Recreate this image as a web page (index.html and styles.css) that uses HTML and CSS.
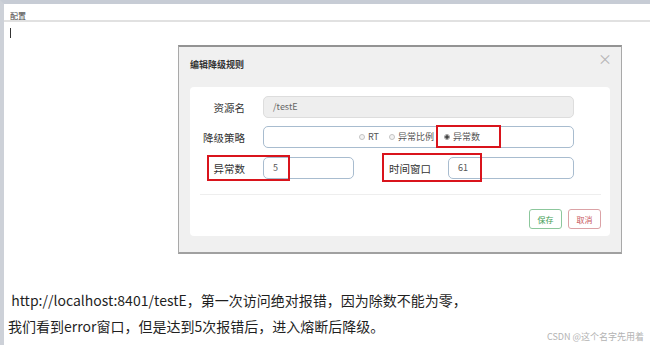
FILE: index.html
```html
<!DOCTYPE HTML>
<html>
    <head>
        <meta charset="utf-8">
        <link rel="stylesheet" href="styles.css">
    </head>
    <body>
        <div class="frame">
            <div class="tabbar"><span class="tab">配置</span></div>
            <div class="canvas">
                <span class="caret"></span>
                <div class="dialog">
                    <div class="dialog-head">
                        <span class="dialog-title">编辑降级规则</span>
                        <span class="close">×</span>
                    </div>
                    <div class="dialog-body">
                        <div class="form-row row-first">
                            <label class="form-label">资源名</label>
                            <div class="field field-readonly">/testE</div>
                        </div>
                        <div class="form-row row-second">
                            <label class="form-label">降级策略</label>
                            <div class="field field-radios">
                                <span class="radio"></span><span class="radio-text">RT</span>
                                <span class="radio"></span><span class="radio-text">异常比例</span>
                                <span class="radio radio-on"></span><span class="radio-text">异常数</span>
                            </div>
                        </div>
                        <div class="form-row">
                            <label class="form-label">异常数</label>
                            <div class="field field-short">5</div>
                            <label class="form-label label-wide">时间窗口</label>
                            <div class="field field-mid">61</div>
                        </div>
                        <div class="divider"></div>
                        <div class="actions">
                            <button class="btn btn-save">保存</button>
                            <button class="btn btn-cancel">取消</button>
                        </div>
                        <!-- red annotation boxes drawn over the form -->
                        <span class="mark mark-radio"></span>
                        <span class="mark mark-count"></span>
                        <span class="mark mark-window"></span>
                    </div>
                </div>
                <p class="note">&nbsp;http://localhost:8401/testE，第一次访问绝对报错，因为除数不能为零，<br>我们看到error窗口，但是达到5次报错后，进入熔断后降级。</p>
            </div>
        </div>
        <span class="watermark">CSDN @这个名字先用着</span>
    </body>
</html>
```

FILE: styles.css
```css
body {
  margin: 0;
  width: 650px;
  height: 345px;
  overflow: hidden;
  position: relative;
  background: #ffffff;
  font-family: "Noto Sans CJK SC", "Noto Sans", sans-serif;
}

.frame {
  box-sizing: border-box;
  height: 345px;
  border-top: 4px solid #c7ccd5;
  border-left: 4px solid #cdd1d8;
}

.tabbar {
  height: 16px;
  border-bottom: 2px solid #e1e1e1;
  padding-left: 6px;
  line-height: 16px;
}
.tab {
  font-size: 8px;
  color: #444;
}

.caret {
  display: block;
  width: 1px;
  height: 10px;
  margin: 6px 0 0 6px;
  background: #333;
}

.dialog {
  box-sizing: border-box;
  width: 444px;
  height: 209px;
  margin: 7px 0 0 174px;
  background: #f0f0f0;
  border: 1px solid #a9a9a9;
  border-top: 2px solid #939393;
  border-bottom: 2px solid #a0a0a0;
}

.dialog-head {
  display: flex;
  justify-content: space-between;
  height: 40px;
  box-sizing: border-box;
  padding: 10px 9px 0 11px;
}
.dialog-title {
  font-size: 9px;
  font-weight: bold;
  color: #333;
  line-height: 16px;
}
.close {
  font-size: 14px;
  color: #b5b5b5;
  line-height: 14px;
  margin-top: -6px;
}

.dialog-body {
  position: relative;
  box-sizing: border-box;
  height: 149px;
  margin: 0 11px;
  padding-top: 9px;
  background: #ffffff;
  border-radius: 4px;
}

.form-row {
  display: flex;
  align-items: center;
  height: 22px;
}
.row-first { margin-bottom: 8px; }
.row-second { margin-bottom: 9px; }

.form-label {
  width: 55px;
  margin-right: 18px;
  text-align: right;
  font-size: 10.5px;
  color: #333;
}
.label-wide {
  width: 77px;
  margin-right: 17px;
}

.field {
  box-sizing: border-box;
  height: 22px;
  width: 311px;
  padding-left: 9px;
  border: 1px solid #a8bccf;
  border-radius: 5px;
  font-size: 9px;
  line-height: 20px;
  color: #555;
}
.field-readonly {
  background: #eeeeee;
  border-color: #dddddd;
  color: #666;
}
.field-short { width: 91px; }
.field-mid { width: 126px; }

.field-radios {
  display: flex;
  align-items: center;
  padding-left: 95px;
}
.radio {
  box-sizing: border-box;
  width: 6px;
  height: 6px;
  border-radius: 50%;
  border: 1px solid #c4c4c4;
  background: #f3f3f3;
  margin-right: 3px;
}
.radio-on {
  border-color: #999;
  background: radial-gradient(circle, #444 0 1.5px, #f3f3f3 2px);
}
.radio-text {
  margin-right: 10px;
}

.divider {
  margin: 15px 9px 0 10px;
  border-top: 1px solid #eeeeee;
}

.actions {
  display: flex;
  justify-content: flex-end;
  gap: 6px;
  margin-top: 14px;
  padding-right: 9px;
}
.btn {
  box-sizing: border-box;
  height: 20px;
  width: 33px;
  padding: 0;
  font-family: inherit;
  font-size: 8px;
  background: #ffffff;
  border-radius: 3px;
}
.btn-save {
  border: 1px solid #8cc79c;
  color: #3e9c53;
}
.btn-cancel {
  border: 1px solid #dba2a6;
  color: #c8585e;
}

.mark {
  position: absolute;
  box-sizing: border-box;
  border: 2px solid #d9141c;
}
.mark-radio { left: 246px; top: 38px; width: 65px; height: 23px; }
.mark-count { left: 17px; top: 68px; width: 83px; height: 26px; }
.mark-window { left: 192px; top: 66px; width: 100px; height: 29px; }

.note {
  margin: 33px 0 0 4px;
  font-size: 14px;
  line-height: 26px;
  color: #1f1f1f;
}

.watermark {
  position: absolute;
  right: 6px;
  bottom: 2px;
  font-size: 9px;
  color: #b3b3b3;
}
```
